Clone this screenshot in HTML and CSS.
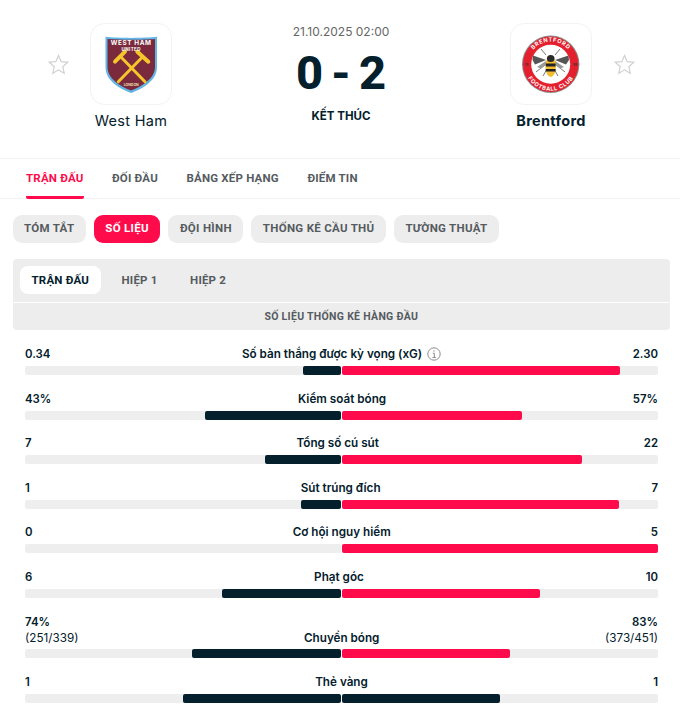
FILE: index.html
```html
<!DOCTYPE html>
<html lang="vi">
<head>
<meta charset="utf-8">
<title>West Ham - Brentford</title>
<link rel="stylesheet" href="styles.css">
</head>
<body>
<header class="match">
  <svg class="star" viewBox="0 0 24 24"><path d="M12 2.600l2.800 6.400 6.900.7-5.200 4.600 1.500 6.800-6-3.500-6 3.500 1.500-6.800-5.200-4.600 6.900-.7z"/></svg>
  <div class="team">
    <div class="tile">
      <svg class="crest" viewBox="0 0 82 82">
        <path d="M15.500 13.800c12 1.500 39 1.500 51.500 0V44C67 58 52 66 41.200 70 30 66 15.500 58 15.500 44z" fill="#62b5e5"/>
        <path d="M17.500 16c12 1 36 1 47.500 0V44C65 56 51 63.800 41.200 67.500 31 63.800 17.500 56 17.500 44z" fill="#7a2a3c"/>
        <g stroke="#f5c62c" fill="none" stroke-linecap="round">
          <path d="M30.700 33.700L55 58.700M52.700 33.700L28.300 58.700" stroke-width="3"/>
          <path d="M25 38.700L35 28.700M58.300 38.700L47.300 28.700" stroke-width="4"/>
        </g>
        <text class="wh-a" x="41.200" y="21.600">WEST HAM</text>
        <text class="wh-b" x="41.200" y="27.900">UNITED</text>
        <text class="wh-c" x="41.200" y="63">LONDON</text>
      </svg>
    </div>
    <div class="name">West Ham</div>
  </div>
  <div class="center">
    <div class="date">21.10.2025 02:00</div>
    <div class="score"><span>0</span><span>-</span><span>2</span></div>
    <div class="status">KẾT THÚC</div>
  </div>
  <div class="team">
    <div class="tile">
      <svg class="crest" viewBox="0 0 82 82">
        <defs>
          <path id="arc-top" d="M18 41.300a22.700 22.700 0 0 1 45.400 0"/>
          <path id="arc-bot" d="M14.300 41.300a26.400 26.400 0 0 0 52.800 0"/>
        </defs>
        <circle cx="40.700" cy="41.300" r="28.700" fill="#8a8a8a"/>
        <circle cx="40.700" cy="41.300" r="27.700" fill="#e5202e"/>
        <circle cx="40.700" cy="41.300" r="19.500" fill="#fff"/>
        <text class="bf-arc"><textPath href="#arc-top" startOffset="50%">BRENTFORD</textPath></text>
        <text class="bf-arc"><textPath href="#arc-bot" startOffset="50%">FOOTBALL CLUB</textPath></text>
        <text class="bf-yr" x="16.500" y="42.800">18</text>
        <text class="bf-yr" x="65" y="42.800">89</text>
        <g stroke="#555" stroke-width=".8" fill="none">
          <path d="M36 32l-5-6M45 32l5-6M26 49l10-8M55 49l-10-8M33 53l4-7M48 53l-4-7"/>
        </g>
        <path d="M36 37L23 32.500 22.500 37 25 41.500z" fill="#555"/>
        <path d="M45 37L58.500 32.500 59 37 56 41.500z" fill="#555"/>
        <path d="M36 38L27 44 31 45.500 37 41z" fill="#9a9a9a"/>
        <path d="M45 38L54 44 50 45.500 44 41z" fill="#9a9a9a"/>
        <ellipse cx="40.700" cy="43.500" rx="5.200" ry="10.500" fill="#f4bd2e"/>
        <path d="M35.800 40.500h9.800v3h-9.800zM35.700 46h9.900v2.600h-9.900z" fill="#222"/>
        <ellipse cx="40.700" cy="35.500" rx="3.800" ry="3.600" fill="#2a2a2a"/>
      </svg>
    </div>
    <div class="name name-win">Brentford</div>
  </div>
  <svg class="star" viewBox="0 0 24 24"><path d="M12 2.600l2.800 6.400 6.900.7-5.200 4.600 1.500 6.800-6-3.500-6 3.500 1.500-6.800-5.200-4.600 6.900-.7z"/></svg>
</header>

<nav class="tabs">
  <a class="tab tab-on">TRẬN ĐẤU</a>
  <a class="tab">ĐỐI ĐẦU</a>
  <a class="tab">BẢNG XẾP HẠNG</a>
  <a class="tab">ĐIỂM TIN</a>
</nav>

<div class="pills">
  <a class="pill">TÓM TẮT</a>
  <a class="pill pill-on">SỐ LIỆU</a>
  <a class="pill">ĐỘI HÌNH</a>
  <a class="pill">THỐNG KÊ CẦU THỦ</a>
  <a class="pill">TƯỜNG THUẬT</a>
</div>

<div class="periods">
  <a class="period period-on">TRẬN ĐẤU</a>
  <a class="period">HIỆP 1</a>
  <a class="period">HIỆP 2</a>
</div>
<div class="section">SỐ LIỆU THỐNG KÊ HÀNG ĐẦU</div>

<main class="stats">
  <section class="stat">
    <div class="stat-head"><span class="val">0.34</span><span class="label">Số bàn thắng được kỳ vọng (xG)<svg class="info" viewBox="0 0 14 14"><circle cx="7" cy="7" r="6.200"/><path d="M5.800 6.200H7.300V10.400M5.500 10.500H8.900M7 3.400v1.300"/></svg></span><span class="val">2.30</span></div>
    <div class="bars"><div class="track left"><div class="fill dark" style="width:12%"></div></div><div class="track"><div class="fill red" style="width:88%"></div></div></div>
  </section>
  <section class="stat">
    <div class="stat-head"><span class="val">43%</span><span class="label">Kiểm soát bóng</span><span class="val">57%</span></div>
    <div class="bars"><div class="track left"><div class="fill dark" style="width:43%"></div></div><div class="track"><div class="fill red" style="width:57%"></div></div></div>
  </section>
  <section class="stat">
    <div class="stat-head"><span class="val">7</span><span class="label">Tổng số cú sút</span><span class="val">22</span></div>
    <div class="bars"><div class="track left"><div class="fill dark" style="width:24%"></div></div><div class="track"><div class="fill red" style="width:76%"></div></div></div>
  </section>
  <section class="stat">
    <div class="stat-head"><span class="val">1</span><span class="label">Sút trúng đích</span><span class="val">7</span></div>
    <div class="bars"><div class="track left"><div class="fill dark" style="width:12.500%"></div></div><div class="track"><div class="fill red" style="width:87.500%"></div></div></div>
  </section>
  <section class="stat">
    <div class="stat-head"><span class="val">0</span><span class="label">Cơ hội nguy hiểm</span><span class="val">5</span></div>
    <div class="bars"><div class="track left"></div><div class="track"><div class="fill red" style="width:100%"></div></div></div>
  </section>
  <section class="stat">
    <div class="stat-head"><span class="val">6</span><span class="label">Phạt góc</span><span class="val">10</span></div>
    <div class="bars"><div class="track left"><div class="fill dark" style="width:37.500%"></div></div><div class="track"><div class="fill red" style="width:62.500%"></div></div></div>
  </section>
  <section class="stat">
    <div class="stat-head stat-head-two"><span class="val">74%<small>(251/339)</small></span><span class="label">Chuyền bóng</span><span class="val">83%<small>(373/451)</small></span></div>
    <div class="bars"><div class="track left"><div class="fill dark" style="width:47%"></div></div><div class="track"><div class="fill red" style="width:53%"></div></div></div>
  </section>
  <section class="stat">
    <div class="stat-head"><span class="val">1</span><span class="label">Thẻ vàng</span><span class="val">1</span></div>
    <div class="bars"><div class="track left"><div class="fill dark" style="width:50%"></div></div><div class="track"><div class="fill dark" style="width:50%"></div></div></div>
  </section>
</main>
</body>
</html>
```

FILE: styles.css
```css
* { box-sizing: border-box; }
html, body { margin: 0; padding: 0; }
body {
  width: 680px;
  height: 716px;
  overflow: hidden;
  background: #fff;
  color: #03202c;
  font-family: Inter, "Noto Sans", sans-serif;
}

.match {
  display: grid;
  grid-template-columns: 26px 120px 1fr 120px 26px;
  height: 159px;
  padding: 0 43px 0 45px;
  border-bottom: 1px solid #f1f1f1;
}
.star {
  width: 23px;
  height: 23px;
  margin: 53px 0 0 1.500px;
  fill: none;
  stroke: #cfcfcf;
  stroke-width: 1.200;
}
.team {
  display: flex;
  flex-direction: column;
  align-items: center;
  padding-top: 23px;
}
.tile {
  width: 82px;
  height: 82px;
  border: 1px solid #f3f3f3;
  border-radius: 14px;
}
.crest {
  display: block;
  width: 82px;
  height: 82px;
  margin: -1px;
}
.name {
  margin-top: 7px;
  font-size: 14.500px;
  line-height: 18px;
  letter-spacing: .3px;
  font-weight: 400;
}
.name-win { font-weight: 700; }
.wh-a, .wh-b, .wh-c {
  fill: #fff;
  font-weight: 700;
  text-anchor: middle;
}
.wh-a { font-size: 6.400px; letter-spacing: .6px; }
.wh-b { font-size: 4.500px; letter-spacing: .4px; }
.wh-c { font-size: 3.500px; fill: #eadfb0; }
.bf-arc {
  fill: #fff;
  font-size: 5.600px;
  font-weight: 700;
  letter-spacing: .6px;
  text-anchor: middle;
}
.bf-yr {
  fill: #333;
  font-size: 3.200px;
  font-weight: 700;
  text-anchor: middle;
}

.center {
  display: flex;
  flex-direction: column;
  align-items: center;
  padding-top: 24px;
}
.date {
  font-size: 12px;
  line-height: 16px;
  color: #666;
}
.score {
  display: flex;
  justify-content: center;
  gap: 8px;
  margin-top: 6px;
  font-family: Roboto, sans-serif;
  font-size: 47px;
  line-height: 54px;
  font-weight: 800;
}
.status {
  margin-top: 8px;
  font-size: 11.500px;
  line-height: 16px;
  font-weight: 700;
}

.tabs {
  display: flex;
  gap: 28.500px;
  height: 40px;
  padding-left: 26px;
  border-bottom: 1px solid #f1f1f1;
  font-family: Roboto, sans-serif;
}
.tab {
  height: 40px;
  font-size: 11.500px;
  line-height: 38px;
  font-weight: 700;
  letter-spacing: .2px;
  color: #555b60;
}
.tab-on {
  color: #ff0a4b;
  border-bottom: 3px solid #ff0a4b;
  border-radius: 0 0 2px 2px;
}

.pills {
  display: flex;
  gap: 8px;
  padding: 16px 0 0 12.500px;
  font-family: Roboto, sans-serif;
}
.pill {
  height: 27.500px;
  padding: 0 11.500px;
  border-radius: 9px;
  background: #ededed;
  color: #555b60;
  font-size: 11.500px;
  line-height: 27.500px;
  font-weight: 700;
  letter-spacing: .3px;
}
.pill-on {
  background: #ff0a4b;
  color: #fff;
}

.periods {
  display: flex;
  gap: 8.500px;
  height: 43px;
  margin: 16.500px 10px 0 12.500px;
  padding: 7px;
  background: #ededed;
  border-radius: 4px 4px 0 0;
  font-family: Roboto, sans-serif;
}
.period {
  padding: 0 12px;
  height: 28px;
  border-radius: 8px;
  font-size: 11.500px;
  line-height: 28px;
  font-weight: 700;
  letter-spacing: .2px;
  color: #555b60;
}
.period-on {
  background: #fff;
  color: #03202c;
}
.section {
  height: 27px;
  margin: 1px 10px 0 12.500px;
  background: #ededed;
  border-radius: 0 0 4px 4px;
  color: #555b60;
  font-family: Roboto, sans-serif;
  font-size: 10.500px;
  line-height: 27px;
  font-weight: 700;
  letter-spacing: .3px;
  text-align: center;
}

.stats {
  padding: 15px 22px 0 25px;
}
.stat { margin-bottom: 14.500px; }
.stat-head {
  display: flex;
  justify-content: space-between;
  align-items: flex-end;
  font-size: 11.700px;
  line-height: 18px;
  font-weight: 600;
}
.stat-head-two {
  min-height: 34px;
  line-height: 15.500px;
}
.val { font-size: 11.400px; }
.val small {
  display: block;
  font-size: 11.700px;
  font-weight: 400;
}
.val:last-child { text-align: right; }
.label {
  display: flex;
  align-items: center;
  gap: 5px;
}
.info {
  width: 14px;
  height: 14px;
  fill: none;
  stroke: #8d8d8d;
  stroke-width: 1;
}
.bars {
  display: grid;
  grid-template-columns: 1fr 1fr;
  gap: 1.500px;
  margin-top: 3px;
}
.track {
  display: flex;
  height: 9px;
  background: #eeeeee;
  border-radius: 2px;
}
.left { justify-content: flex-end; }
.fill {
  height: 9px;
  border-radius: 2px;
}
.dark { background: #03202c; }
.red { background: #ff0a4b; }
```
